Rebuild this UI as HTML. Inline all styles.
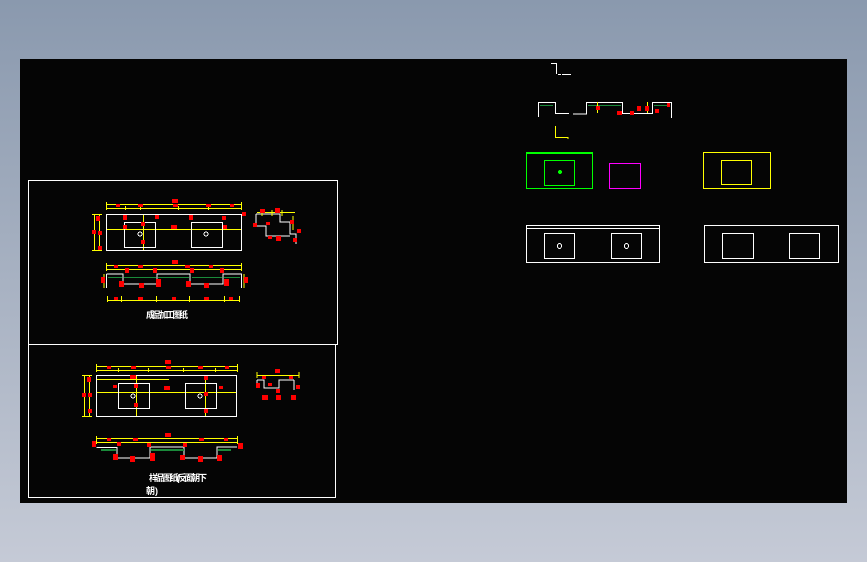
<!DOCTYPE html>
<html><head><meta charset="utf-8"><style>
html,body{margin:0;padding:0;width:867px;height:562px;overflow:hidden;background:linear-gradient(#8a99ae,#c5cad6);}
svg{position:absolute;left:0;top:0}
text{font-family:"Liberation Sans","Noto Sans CJK SC",sans-serif;font-weight:bold;fill:#fff}
</style></head><body>
<svg width="867" height="562" viewBox="0 0 867 562" shape-rendering="crispEdges">
<rect x="20" y="59" width="827" height="444" fill="#050505"/>
<g fill="none" stroke="#fff" stroke-width="1">
<rect x="28.5" y="180.5" width="309" height="164"/>
<rect x="28.5" y="344.5" width="307" height="153"/>
</g>
<!-- top drawing -->
<g fill="none" stroke="#ff0" stroke-width="1">
<path d="M106.5 204.5H241.5M106.5 208.5H241.5M106.5 202v8M241.5 202v8M125.5 206v4M140.5 206v4M178.5 206v4M208.5 206v4"/>
<path d="M106 229.5H241M143.5 214v36M94.5 214v36M99.5 214v36M92 214.5h10M92 250.5h10"/>
<path d="M106.5 265.5H241.5M106.5 269.5H241.5M106.5 263v8M241.5 263v8M104 274v14M244 274v14"/>
<path d="M107.5 300.5H239.5M107.5 296v6M121.5 296v6M156.5 296v6M189.5 296v6M224.5 296v6M239.5 296v6"/>
</g>
<g fill="none" stroke="#fff" stroke-width="1">
<rect x="106.5" y="214.5" width="135" height="36"/>
<rect x="124.5" y="222.5" width="31" height="25"/>
<rect x="191.5" y="222.5" width="31" height="25"/>
<circle cx="140" cy="234" r="2"/><circle cx="206" cy="234" r="2"/>
<path d="M106.5 274V288M106.5 274H123V284H157V274H190V284H223V274H241.5V288"/>
<path d="M256 214H280V222H290V234H296V244M256 214V226H266V236H290"/>
</g>
<g stroke="#1a8a3a" stroke-width="1"><path d="M108 277.5H122M124 277.5H156M158 277.5H189M192 277.5H222M224 277.5H240"/></g>
<g fill="none" stroke="#ff0"><path d="M257 212.5H295M262 210v6M272 210v6M282 210v6M293 216V230"/></g>
<!-- bottom drawing -->
<g fill="none" stroke="#ff0" stroke-width="1">
<path d="M96.5 366.5H237.5M96.5 370.5H237.5M96.5 364v8M237.5 364v8M118.5 368v4M148.5 368v4M183.5 368v4M215.5 368v4"/>
<path d="M96 392.5H237M96 379.5H169M136.5 375v41M205.5 375v41M84.5 375v41M89.5 375v41M82 375.5h10M82 416.5h10"/>
<path d="M96.5 438.5H237.5M96.5 442.5H237.5M96.5 436v8M237.5 436v8"/>
<path d="M257 375.5H299M257 372v6M299 372v6"/>
</g>
<g fill="none" stroke="#fff" stroke-width="1">
<rect x="96.5" y="375.5" width="140" height="41"/>
<rect x="118.5" y="383.5" width="31" height="25"/>
<rect x="185.5" y="383.5" width="31" height="25"/>
<circle cx="133" cy="396" r="2"/><circle cx="200" cy="396" r="2"/>
<path d="M96.5 447.5H117V458H150V447H184V458H217V447H237"/>
<path d="M257 380H264V388H279V380H294M257 380V386M294 380V390"/>
</g>
<g stroke="#1a8a3a" stroke-width="2"><path d="M101 450H116M151 450H184M218 450H231"/></g>
<!-- red dim markers -->
<g fill="#f00">
<rect x="172" y="199" width="6" height="4"/><rect x="116" y="204" width="4" height="3"/><rect x="138" y="204" width="5" height="3"/><rect x="173" y="204" width="5" height="3"/><rect x="206" y="204" width="5" height="3"/><rect x="230" y="204" width="4" height="3"/>
<rect x="123" y="215" width="4" height="5"/><rect x="155" y="215" width="4" height="4"/><rect x="189" y="215" width="4" height="5"/><rect x="222" y="216" width="4" height="4"/>
<rect x="123" y="225" width="4" height="4"/><rect x="141" y="222" width="4" height="4"/><rect x="171" y="225" width="6" height="4"/><rect x="223" y="225" width="4" height="4"/><rect x="141" y="240" width="4" height="4"/>
<rect x="96" y="216" width="4" height="5"/><rect x="92" y="230" width="4" height="4"/><rect x="98" y="231" width="4" height="4"/><rect x="98" y="246" width="4" height="4"/><rect x="242" y="212" width="4" height="4"/>
<rect x="172" y="260" width="6" height="4"/><rect x="114" y="265" width="4" height="3"/><rect x="138" y="265" width="5" height="3"/><rect x="185" y="265" width="5" height="3"/><rect x="209" y="265" width="4" height="3"/>
<rect x="125" y="268" width="4" height="5"/><rect x="153" y="268" width="4" height="5"/><rect x="190" y="268" width="4" height="5"/><rect x="220" y="268" width="4" height="5"/>
<rect x="101" y="277" width="4" height="6"/><rect x="244" y="277" width="4" height="6"/>
<rect x="119" y="281" width="5" height="6"/><rect x="139" y="283" width="5" height="5"/><rect x="156" y="279" width="5" height="8"/><rect x="186" y="281" width="5" height="6"/><rect x="204" y="283" width="5" height="5"/><rect x="224" y="279" width="5" height="7"/>
<rect x="114" y="297" width="4" height="3"/><rect x="138" y="297" width="5" height="3"/><rect x="172" y="297" width="4" height="3"/><rect x="204" y="297" width="5" height="3"/><rect x="229" y="297" width="4" height="3"/>
<rect x="260" y="209" width="5" height="4"/><rect x="275" y="208" width="5" height="5"/><rect x="253" y="223" width="4" height="4"/><rect x="266" y="222" width="4" height="3"/><rect x="290" y="220" width="4" height="4"/><rect x="297" y="229" width="4" height="4"/><rect x="276" y="236" width="5" height="5"/><rect x="268" y="236" width="4" height="3"/><rect x="293" y="238" width="4" height="4"/>
<rect x="165" y="360" width="6" height="4"/><rect x="107" y="366" width="4" height="3"/><rect x="131" y="366" width="5" height="3"/><rect x="166" y="366" width="5" height="3"/><rect x="198" y="366" width="5" height="3"/><rect x="225" y="366" width="4" height="3"/>
<rect x="130" y="375" width="6" height="4"/><rect x="204" y="376" width="4" height="4"/><rect x="113" y="385" width="4" height="3"/><rect x="134" y="384" width="4" height="4"/><rect x="164" y="386" width="6" height="4"/><rect x="219" y="386" width="4" height="3"/><rect x="204" y="392" width="4" height="4"/><rect x="134" y="403" width="4" height="4"/><rect x="204" y="409" width="4" height="4"/>
<rect x="87" y="377" width="4" height="5"/><rect x="82" y="393" width="4" height="4"/><rect x="88" y="393" width="4" height="4"/><rect x="88" y="409" width="4" height="4"/>
<rect x="165" y="433" width="6" height="4"/><rect x="107" y="438" width="4" height="3"/><rect x="133" y="438" width="5" height="3"/><rect x="199" y="438" width="5" height="3"/><rect x="224" y="438" width="4" height="3"/>
<rect x="92" y="441" width="4" height="6"/><rect x="117" y="442" width="4" height="4"/><rect x="147" y="443" width="4" height="4"/><rect x="183" y="443" width="4" height="4"/><rect x="238" y="443" width="5" height="6"/>
<rect x="113" y="454" width="5" height="6"/><rect x="130" y="456" width="5" height="6"/><rect x="150" y="453" width="5" height="8"/><rect x="180" y="455" width="5" height="5"/><rect x="198" y="456" width="5" height="6"/><rect x="217" y="455" width="5" height="6"/>
<rect x="275" y="369" width="5" height="4"/><rect x="262" y="376" width="4" height="3"/><rect x="289" y="376" width="4" height="3"/><rect x="256" y="383" width="4" height="5"/><rect x="268" y="383" width="4" height="3"/><rect x="296" y="385" width="4" height="4"/><rect x="276" y="389" width="4" height="4"/><rect x="262" y="395" width="6" height="5"/><rect x="276" y="395" width="5" height="5"/><rect x="291" y="395" width="5" height="5"/>
</g>
<text x="146" y="318" font-size="9" textLength="42">成品加工图纸</text>
<text x="149" y="481" font-size="9" textLength="58">样品图纸(反面朝下</text>
<text x="146" y="494" font-size="9">朝)</text>
<!-- right area -->
<g fill="none" stroke="#fff" stroke-width="1">
<path d="M551 63.5H556.5V74M558 74.5H561M562 74.5H571"/>
<path d="M538.5 117V102.5H555.5V113.5H569M573 114H586.5V102.5H622.5V113.5H652.5V102.5H671.5V118"/>
<rect x="526.5" y="225.5" width="133" height="37"/><path d="M526 228.5H659"/>
<rect x="544.5" y="233.5" width="30" height="25"/><rect x="611.5" y="233.5" width="30" height="25"/>
<ellipse cx="559.5" cy="246" rx="2" ry="2.5"/><ellipse cx="626.5" cy="246" rx="2" ry="2.5"/>
<rect x="704.5" y="225.5" width="134" height="37"/>
<rect x="722.5" y="233.5" width="31" height="25"/><rect x="789.5" y="233.5" width="30" height="25"/>
</g>
<g stroke="#1a8a3a"><path d="M540 105.5H553M588 105.5H621M654 105.5H670"/></g>
<g fill="none" stroke="#ff0" stroke-width="1">
<path d="M555.5 126V137.5H568V139"/><path d="M597.5 102V113M647.5 102V113"/>
<rect x="703.5" y="152.5" width="67" height="36"/><rect x="721.5" y="160.5" width="30" height="24"/>
</g>
<g fill="#f00"><rect x="596" y="106" width="4" height="4"/><rect x="617" y="111" width="5" height="4"/><rect x="630" y="111" width="4" height="4"/><rect x="637" y="106" width="4" height="5"/><rect x="645" y="106" width="4" height="5"/><rect x="655" y="109" width="4" height="4"/><rect x="667" y="103" width="3" height="4"/></g>
<g fill="none" stroke="#0f0" stroke-width="1">
<rect x="526.5" y="152.5" width="66" height="36"/><path d="M526 153.5H593"/>
<rect x="544.5" y="160.5" width="30" height="25"/>
</g>
<circle cx="560" cy="172" r="2" fill="#0f0"/>
<rect x="609.5" y="163.5" width="31" height="25" fill="none" stroke="#f0f"/>
</svg>
</body></html>
